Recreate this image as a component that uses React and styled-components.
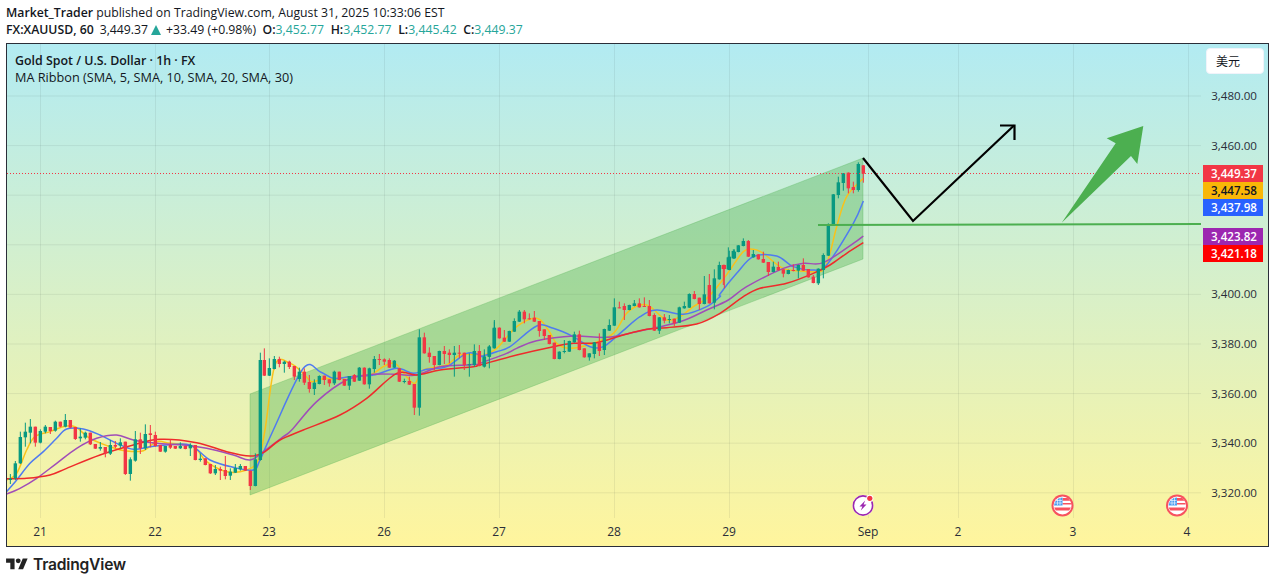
import React from 'react'
import styled, { createGlobalStyle } from 'styled-components'

const UI_FONT = '"Open Sans", "Noto Sans", sans-serif'

const GlobalStyle = createGlobalStyle`
  html, body {
    margin: 0;
    padding: 0;
    background: #fff;
    font-family: ${UI_FONT};
    color: #131722;
  }
`

// candles are read off the picture in groups: [x, bodyTop, bodyBottom, wickTop, wickBottom, colour]
const toCandles = (ox, oy, rows) =>
  rows.map(([x, t, b, wt, wb, c]) => ({
    x: ox + x / 3,
    top: oy + t / 3,
    bottom: oy + b / 3,
    high: oy + (wt ?? t) / 3,
    low: oy + (wb ?? b) / 3,
    up: c === 'g',
  }))

const CANDLES = [
  ...toCandles(0, 380, [
    [31, 296, 300, 282, 312, 'g'], [46, 250, 295, 243, 300, 'g'], [61, 171, 250, 155, 252, 'g'],
    [76, 155, 172, 128, 200, 'g'], [91, 140, 158, 117, 190, 'g'], [106, 140, 188, 140, 200, 'r'],
    [121, 153, 188, 148, 190, 'g'], [136, 140, 155, 135, 160, 'g'], [151, 141, 153, 141, 162, 'r'],
    [166, 125, 152, 122, 155, 'g'], [181, 125, 140, 125, 142, 'r'], [196, 120, 140, 102, 142, 'g'],
    [211, 120, 143, 120, 145, 'r'], [226, 141, 177, 141, 180, 'r'], [241, 170, 175, 145, 185, 'g'],
    [256, 158, 173, 155, 178, 'g'], [271, 158, 193, 158, 195, 'r'], [286, 192, 206, 192, 207, 'r'],
    [301, 201, 206, 186, 212, 'g'], [316, 201, 220, 201, 232, 'r'], [331, 195, 221, 180, 225, 'g'],
    [346, 195, 200, 183, 205, 'r'], [361, 187, 197, 175, 205, 'g'], [376, 185, 282, 185, 285, 'r'],
    [391, 238, 282, 232, 302, 'g'], [406, 178, 242, 153, 245, 'g'], [421, 178, 205, 158, 222, 'r'],
    [436, 162, 205, 133, 210, 'g'], [451, 160, 165, 135, 202, 'r'], [466, 165, 198, 155, 200, 'r'],
    [481, 195, 215, 195, 216, 'r'], [496, 198, 215, 198, 218, 'g'], [511, 195, 203, 178, 207, 'r'],
    [526, 198, 206, 198, 207, 'r'], [541, 198, 205, 187, 207, 'g'], [556, 198, 207, 198, 208, 'r'],
    [571, 195, 205, 190, 228, 'g'], [586, 195, 240, 195, 241, 'r'], [601, 236, 240, 220, 245, 'g'],
    [616, 235, 255, 235, 256, 'r'], [631, 252, 280, 252, 282, 'r'], [646, 267, 280, 255, 285, 'g'],
    [661, 267, 272, 260, 300, 'r'], [676, 270, 288, 228, 298, 'r'], [691, 275, 287, 265, 300, 'g'],
    [706, 264, 278, 252, 279, 'g'], [721, 258, 268, 252, 272, 'g'], [736, 258, 272, 258, 273, 'r'],
    [751, 272, 318, 272, 330, 'r'], [766, 238, 318, 220, 319, 'g'],
  ]),
  ...toCandles(240, 320, [
    [61, 120, 420, 98, 422, 'g'], [73, 120, 167, 85, 168, 'r'], [88, 144, 167, 115, 168, 'g'],
    [103, 117, 147, 108, 148, 'g'], [118, 117, 132, 110, 142, 'r'], [133, 125, 132, 122, 158, 'g'],
    [148, 125, 141, 122, 147, 'r'], [163, 138, 170, 138, 180, 'r'], [178, 155, 177, 143, 185, 'g'],
    [193, 155, 188, 145, 195, 'r'], [208, 186, 207, 165, 218, 'r'], [223, 188, 207, 178, 225, 'g'],
    [238, 168, 192, 166, 193, 'g'], [253, 167, 180, 167, 195, 'r'], [268, 178, 190, 178, 200, 'r'],
    [283, 155, 190, 152, 195, 'g'], [298, 155, 180, 155, 181, 'r'], [313, 177, 197, 177, 198, 'r'],
    [328, 168, 197, 168, 210, 'g'], [343, 165, 185, 162, 186, 'r'], [358, 143, 182, 141, 183, 'g'],
    [373, 143, 193, 142, 194, 'r'], [388, 145, 193, 143, 206, 'g'], [403, 117, 147, 108, 158, 'g'],
    [418, 117, 120, 102, 135, 'r'], [433, 118, 125, 115, 135, 'r'], [448, 120, 143, 115, 144, 'r'],
    [463, 122, 143, 120, 144, 'g'], [478, 145, 185, 145, 186, 'r'], [493, 183, 185, 176, 190, 'g'],
    [508, 183, 194, 170, 195, 'r'], [523, 192, 263, 192, 285, 'r'], [538, 52, 263, 28, 287, 'g'],
    [553, 52, 100, 38, 101, 'r'], [568, 98, 111, 82, 128, 'r'], [583, 108, 135, 108, 150, 'r'],
    [598, 93, 135, 92, 136, 'g'], [613, 93, 102, 78, 132, 'r'], [628, 98, 105, 88, 130, 'r'],
    [643, 98, 105, 78, 170, 'g'], [658, 98, 100, 75, 115, 'r'], [673, 98, 135, 98, 150, 'r'],
    [688, 133, 136, 100, 170, 'g'], [703, 93, 135, 73, 140, 'g'], [718, 93, 138, 75, 139, 'r'],
    [733, 110, 138, 100, 142, 'g'], [748, 80, 110, 75, 111, 'g'], [763, 25, 82, 0, 83, 'g'],
  ]),
  ...toCandles(480, 220, [
    [13, 410, 440, 388, 442, 'g'], [28, 380, 410, 378, 445, 'g'], [43, 323, 385, 305, 386, 'g'],
    [58, 323, 355, 322, 356, 'r'], [73, 353, 365, 330, 366, 'r'], [88, 333, 365, 332, 366, 'g'],
    [103, 303, 335, 295, 336, 'g'], [118, 275, 305, 270, 306, 'g'], [133, 275, 298, 270, 310, 'r'],
    [148, 295, 298, 280, 299, 'r'], [163, 293, 305, 273, 306, 'r'], [178, 303, 333, 303, 350, 'r'],
    [193, 328, 348, 328, 360, 'r'], [208, 345, 372, 345, 373, 'r'], [223, 368, 417, 368, 418, 'r'],
    [238, 395, 417, 394, 418, 'g'], [253, 393, 396, 360, 400, 'g'], [268, 363, 395, 362, 396, 'g'],
    [283, 343, 367, 335, 368, 'g'], [298, 343, 390, 332, 391, 'r'], [313, 385, 412, 385, 413, 'r'],
    [328, 400, 412, 400, 422, 'g'], [343, 367, 402, 366, 415, 'g'], [358, 367, 393, 340, 408, 'r'],
    [373, 327, 390, 326, 405, 'g'], [388, 315, 332, 298, 333, 'g'], [403, 262, 317, 235, 318, 'g'],
    [418, 262, 264, 245, 265, 'r'], [433, 258, 270, 250, 300, 'r'], [448, 255, 270, 254, 271, 'g'],
    [463, 250, 258, 240, 259, 'g'], [478, 250, 262, 235, 263, 'r'], [493, 258, 260, 232, 261, 'r'],
    [508, 258, 288, 240, 289, 'r'], [523, 285, 332, 280, 333, 'r'], [538, 292, 332, 291, 342, 'g'],
    [553, 292, 302, 282, 310, 'r'], [568, 297, 300, 285, 310, 'g'], [583, 296, 310, 296, 318, 'r'],
    [598, 262, 308, 260, 309, 'g'], [613, 258, 265, 245, 266, 'g'], [628, 222, 263, 220, 264, 'g'],
    [643, 222, 237, 213, 238, 'r'], [658, 233, 252, 233, 270, 'r'], [673, 223, 252, 168, 253, 'g'],
    [688, 195, 250, 162, 251, 'r'], [703, 175, 248, 148, 268, 'g'], [718, 135, 178, 125, 179, 'g'],
    [733, 135, 147, 134, 205, 'r'], [748, 110, 150, 92, 151, 'g'], [763, 95, 115, 88, 116, 'g'],
  ]),
  ...toCandles(720, 140, [
    [10, 375, 387, 374, 435, 'r'], [25, 352, 388, 322, 389, 'g'], [40, 333, 355, 328, 356, 'g'],
    [55, 316, 336, 315, 337, 'g'], [70, 303, 318, 295, 319, 'g'], [85, 303, 350, 300, 351, 'r'],
    [100, 342, 352, 330, 353, 'g'], [115, 343, 358, 343, 359, 'r'], [130, 357, 368, 335, 369, 'r'],
    [145, 366, 396, 366, 408, 'r'], [160, 380, 396, 365, 397, 'g'], [175, 381, 391, 365, 392, 'r'],
    [190, 388, 401, 388, 412, 'r'], [205, 390, 402, 389, 403, 'g'], [220, 390, 393, 373, 394, 'r'],
    [235, 375, 392, 374, 415, 'g'], [250, 375, 392, 355, 393, 'r'], [265, 387, 412, 387, 413, 'r'],
    [280, 410, 429, 405, 430, 'r'], [295, 386, 430, 385, 435, 'g'], [310, 345, 390, 340, 415, 'g'],
    [325, 255, 347, 250, 348, 'g'], [340, 163, 257, 162, 258, 'g'], [355, 127, 165, 110, 175, 'g'],
    [370, 100, 129, 99, 152, 'g'], [385, 98, 145, 97, 160, 'r'], [400, 141, 150, 125, 160, 'r'],
    [415, 72, 150, 67, 155, 'g'], [430, 76, 101, 75, 128, 'r'],
  ]),
]

const toLine = (ox, oy, pts) => pts.map(([x, y]) => [ox + x / 3, oy + y / 3])

// catmull-rom through the read-off points, the ribbon lines are smooth in the chart
const smoothPath = pts => {
  let d = `M${pts[0][0]} ${pts[0][1]}`
  for (let i = 0; i < pts.length - 1; i++) {
    const p0 = pts[i - 1] || pts[i]
    const p1 = pts[i]
    const p2 = pts[i + 1]
    const p3 = pts[i + 2] || p2
    const c1x = p1[0] + (p2[0] - p0[0]) / 6
    const c1y = p1[1] + (p2[1] - p0[1]) / 6
    const c2x = p2[0] - (p3[0] - p1[0]) / 6
    const c2y = p2[1] - (p3[1] - p1[1]) / 6
    d += ` C${c1x} ${c1y} ${c2x} ${c2y} ${p2[0]} ${p2[1]}`
  }
  return d
}

const RIBBON = [
  {
    color: '#f9c21a',
    points: [
      ...toLine(0, 380, [[20, 300], [50, 280], [80, 210], [105, 170], [150, 155], [190, 140], [225, 140], [270, 175], [330, 200], [380, 213], [430, 212], [470, 185], [510, 190], [580, 200], [620, 245], [680, 275], [740, 270], [775, 240]]),
      ...toLine(240, 320, [[75, 330], [105, 135], [150, 130], [190, 160], [215, 185], [255, 175], [290, 178], [330, 170], [390, 165], [430, 140], [465, 130], [500, 170], [525, 190], [550, 150], [620, 135], [660, 105], [720, 105]]),
      ...toLine(480, 220, [[0, 410], [50, 385], [110, 320], [170, 295], [205, 330], [230, 370], [270, 385], [340, 370], [400, 340], [440, 280], [480, 255], [510, 260], [560, 300], [600, 290], [640, 260], [680, 235]]),
      ...toLine(720, 140, [[0, 430], [30, 390], [70, 335], [100, 328], [130, 340], [190, 385], [270, 395], [310, 390], [330, 340], [350, 260], [380, 170], [430, 115]]),
    ],
  },
  {
    color: '#4f7bf0',
    points: [
      ...toLine(0, 380, [[20, 335], [50, 300], [90, 250], [130, 215], [170, 175], [200, 147], [250, 147], [300, 165], [350, 190], [400, 208], [450, 200], [500, 195], [570, 195], [630, 240], [700, 262], [760, 270], [780, 240]]),
      ...toLine(240, 320, [[100, 330], [190, 145], [240, 155], [280, 175], [330, 170], [400, 165], [470, 145], [520, 160], [560, 148], [620, 140], [680, 100], [720, 105]]),
      ...toLine(480, 220, [[0, 410], [50, 395], [90, 380], [170, 318], [220, 325], [280, 350], [330, 380], [370, 380], [420, 340], [480, 290], [530, 270], [610, 283], [680, 260], [720, 230]]),
      ...toLine(720, 140, [[0, 462], [50, 400], [100, 350], [170, 348], [220, 380], [280, 390], [320, 375], [400, 250], [430, 183]]),
    ],
  },
  {
    color: '#a04db8',
    points: [
      ...toLine(0, 380, [[20, 342], [60, 325], [110, 295], [170, 250], [230, 205], [290, 175], [350, 165], [400, 180], [470, 190], [550, 195], [620, 205], [700, 225], [750, 240], [790, 215], [850, 170]]),
      ...toLine(240, 320, [[155, 330], [230, 245], [320, 180], [400, 163], [470, 163], [530, 165], [600, 140], [680, 135], [720, 132]]),
      ...toLine(480, 220, [[0, 430], [80, 400], [110, 385], [170, 362], [280, 348], [380, 352], [470, 335], [600, 305], [680, 270]]),
      ...toLine(720, 140, [[25, 480], [80, 440], [190, 385], [250, 370], [310, 368], [400, 310], [430, 288]]),
    ],
  },
  {
    color: '#ee2b2b',
    points: [
      ...toLine(0, 380, [[20, 296], [80, 295], [150, 285], [200, 265], [300, 225], [400, 195], [480, 178], [590, 188], [680, 215], [750, 228], [790, 218], [840, 180]]),
      ...toLine(240, 320, [[190, 330], [300, 285], [380, 235], [470, 160], [530, 165], [600, 150], [700, 140]]),
      ...toLine(480, 220, [[0, 435], [110, 405], [220, 380], [280, 370], [350, 368], [430, 345], [500, 328], [560, 323], [650, 312], [720, 280]]),
      ...toLine(720, 140, [[70, 470], [120, 445], [200, 430], [280, 400], [330, 375], [380, 340], [430, 308]]),
    ],
  },
]

const GRID_X = [40, 155, 269, 384, 499, 614, 729, 868, 958, 1073, 1188]
const GRID_Y = [96, 145.6, 195.2, 244.8, 294.4, 344, 393.6, 443.2, 492.8]

const PRICES = ['3,480.00', '3,460.00', '3,440.00', '3,420.00', '3,400.00', '3,380.00', '3,360.00', '3,340.00', '3,320.00']
const HIDDEN_PRICES = ['3,440.00', '3,420.00'] // covered by the price tags

const DAYS = [
  ['21', 40], ['22', 155], ['23', 269], ['26', 384], ['27', 499], ['28', 614], ['29', 729],
  ['Sep', 868], ['2', 958], ['3', 1073], ['4', 1187],
]

const TAGS = [
  { value: '3,449.37', bg: '#f23645', fg: '#fff', y: 165 },
  { value: '3,447.58', bg: '#f9b707', fg: '#131722', y: 182 },
  { value: '3,437.98', bg: '#2962ff', fg: '#fff', y: 199 },
  { value: '3,423.82', bg: '#9c27b0', fg: '#fff', y: 228 },
  { value: '3,421.18', bg: '#ff0000', fg: '#fff', y: 245 },
]

const Page = styled.div`
  width: 1275px;
  height: 583px;
  overflow: hidden;
  display: flex;
  flex-direction: column;
`

const Header = styled.header`
  height: 43px;
  padding: 4px 6px 0;
  box-sizing: border-box;
  font-size: 12.25px;
  line-height: 17px;
`

const Line = styled.div`
  white-space: nowrap;
`

const Strong = styled.b`
  font-weight: 600;
`

const Symbol = styled(Strong)`
  margin-right: 6px;
`

const Change = styled.span`
  margin-right: 6.5px;
`

const Val = styled.span`
  color: #26a69a;
  margin-right: 6.6px;
`

const UpTriangle = styled.span`
  display: inline-block;
  width: 0;
  height: 0;
  margin: 0 5px 0 3px;
  border-left: 5px solid transparent;
  border-right: 5px solid transparent;
  border-bottom: 10px solid #26a69a;
  vertical-align: -1px;
`

const Panel = styled.section`
  position: relative;
  width: 1263px;
  height: 504px;
  margin-left: 6px;
  box-sizing: border-box;
  border: 1px solid #2a2e39;
  background: linear-gradient(180deg, #b2ebf2 0%, #fff59d 100%);
  overflow: hidden;
`

const ChartSvg = styled.svg`
  position: absolute;
  left: -7px;
  top: -44px;
  width: 1275px;
  height: 583px;
`

const Legend = styled.div`
  position: absolute;
  left: 8px;
  top: 8px;
  font-size: 12.7px;
  line-height: 17px;
`

const LegendTitle = styled(Line)`
  font-size: 12.4px;
  font-weight: 600;
`

const CurrencyButton = styled.div`
  position: absolute;
  left: 1199px;
  top: 4px;
  width: 58px;
  height: 26px;
  box-sizing: border-box;
  padding-left: 9px;
  background: #fff;
  border: 1px solid #f0f3fa;
  border-radius: 4px;
  font: 12px/24px "Noto Sans CJK SC", sans-serif;
`

const PriceAxis = styled.div`
  position: absolute;
  left: 1204px;
  top: 0;
  width: 46px;
  height: 100%;
  font-size: 11.6px;
  text-align: right;
`

const PriceLabel = styled.span`
  position: absolute;
  right: 0;
  top: ${p => p.$y - 44 - 8}px;
  line-height: 16px;
  color: #2a2e39;
`

const PriceTag = styled.div`
  position: absolute;
  left: 1196px;
  top: ${p => p.$y - 44}px;
  width: 60px;
  height: 17px;
  padding-right: 6px;
  box-sizing: border-box;
  background: ${p => p.$bg};
  color: ${p => p.$fg};
  font-size: 11.6px;
  font-weight: 600;
  line-height: 17px;
  text-align: right;
`

const DayLabel = styled.span`
  position: absolute;
  top: 480px;
  left: ${p => p.$x - 7}px;
  transform: translateX(-50%);
  font-size: 12px;
  line-height: 16px;
  font-weight: ${p => (p.$month ? 500 : 400)};
  color: #2a2e39;
`

const Footer = styled.footer`
  display: flex;
  align-items: center;
  gap: 5px;
  height: 34px;
  padding-left: 6px;
`

const Wordmark = styled.span`
  font-family: Inter, sans-serif;
  font-size: 15.6px;
  font-weight: 600;
  letter-spacing: -0.2px;
  color: #222;
`

function Candle({ x, top, bottom, high, low, up }) {
  const color = up ? '#089981' : '#f23645'
  return (
    <g fill={color}>
      <rect x={x - 0.5} y={high} width={1} height={low - high} />
      <rect x={x - 1.7} y={top} width={3.4} height={Math.max(bottom - top, 1)} />
    </g>
  )
}

function LightningEvent({ x, y }) {
  return (
    <g transform={`translate(${x} ${y})`}>
      <circle r={10.5} fill="#fff" />
      <circle r={9.6} fill="none" stroke="#9c27b0" strokeWidth={1.6} />
      <path d="M2.2 -5 L-3.5 1 H-0.6 L-2.2 5 L3.5 -1 H0.6 Z" fill="#9c27b0" />
      <circle cx={6.8} cy={-7.2} r={3.6} fill="#fff" />
      <circle cx={6.8} cy={-7.2} r={2.6} fill="#f23645" />
    </g>
  )
}

function FlagEvent({ x, y }) {
  return (
    <g transform={`translate(${x} ${y})`}>
      <circle r={11} fill="#f7525f" />
      <circle r={9} fill="#fff" />
      <path d="M0 -7.5 H5 A8 8 0 0 1 7.6 -4.8 H0 Z M0 -2.6 H8.4 V-1 H0 Z" fill="#f7525f" />
      <path d="M-8.3 2 H8.3 A8.6 8.6 0 0 1 6.6 5 H-6.6 A8.6 8.6 0 0 1 -8.3 2 Z" fill="#f7525f" />
      <path d="M-8.5 0 A8.5 8.5 0 0 1 0 -8 V0 Z" fill="#4a9df0" />
      <path d="M-6.5 -5 H-0.5 M-7.5 -2.5 H-0.5 M-5 -7 V-0.5 M-2.5 -7.5 V-0.5" stroke="#fff" strokeWidth={0.6} fill="none" />
    </g>
  )
}

function Chart() {
  return (
    <ChartSvg viewBox="0 0 1275 583">
      <g stroke="#2a2e39" strokeOpacity={0.08} strokeWidth={1}>
        {GRID_X.map(x => <line key={x} x1={x + 0.5} x2={x + 0.5} y1={44} y2={518} />)}
        {GRID_Y.map(y => <line key={y} x1={7} x2={1201} y1={y} y2={y} />)}
      </g>

      <polygon points="250,394 863,158 863,259 250,495" fill="#4caf50" fillOpacity={0.38} stroke="#4caf50" strokeOpacity={0.3} />

      {RIBBON.map(r => (
        <path
          key={r.color}
          d={smoothPath(r.points)}
          fill="none"
          stroke={r.color}
          strokeWidth={1.5}
          strokeLinejoin="round"
        />
      ))}

      {CANDLES.map(c => <Candle key={`${c.x}-${c.top}`} {...c} />)}

      <line x1={7} x2={1201} y1={173.5} y2={173.5} stroke="#f23645" strokeWidth={1} strokeDasharray="1 2" />

      <line x1={818} x2={1201} y1={225} y2={224} stroke="#4caf50" strokeWidth={2.2} />
      <polygon points="1061.7,222.7 1115.7,143.3 1106.7,138.3 1143.3,126 1137.3,164 1131,156" fill="#4caf50" />

      <polyline points="863,158 913,221 1014,125.5" fill="none" stroke="#000" strokeWidth={2.2} />
      <polyline points="1000,125.5 1014.5,125.5 1014.5,140" fill="none" stroke="#000" strokeWidth={2.2} />

      <LightningEvent x={863} y={505.5} />
      <FlagEvent x={1062.5} y={505.5} />
      <FlagEvent x={1177} y={505.5} />
    </ChartSvg>
  )
}

export default function App() {
  return (
    <Page>
      <GlobalStyle />
      <Header>
        <Line><Strong>Market_Trader</Strong> published on TradingView.com, August 31, 2025 10:33:06 EST</Line>
        <Line>
          <Symbol>FX:XAUUSD, 60</Symbol>
          3,449.37<UpTriangle /><Change>+33.49 (+0.98%)</Change>
          <Strong>O:</Strong><Val>3,452.77</Val>
          <Strong>H:</Strong><Val>3,452.77</Val>
          <Strong>L:</Strong><Val>3,445.42</Val>
          <Strong>C:</Strong><Val>3,449.37</Val>
        </Line>
      </Header>
      <Panel>
        <Chart />
        <Legend>
          <LegendTitle>Gold Spot / U.S. Dollar · 1h · FX</LegendTitle>
          <Line>MA Ribbon (SMA, 5, SMA, 10, SMA, 20, SMA, 30)</Line>
        </Legend>
        <CurrencyButton>美元</CurrencyButton>
        <PriceAxis>
          {PRICES.map((p, i) =>
            HIDDEN_PRICES.includes(p) ? null : <PriceLabel key={p} $y={GRID_Y[i]}>{p}</PriceLabel>
          )}
        </PriceAxis>
        {TAGS.map(t => (
          <PriceTag key={t.value} $y={t.y} $bg={t.bg} $fg={t.fg}>{t.value}</PriceTag>
        ))}
        {DAYS.map(([label, x]) => (
          <DayLabel key={label} $x={x} $month={label === 'Sep'}>{label}</DayLabel>
        ))}
      </Panel>
      <Footer>
        <svg width="22" height="17" viewBox="0 0 36 28" fill="#222">
          <path d="M14 22H7V11H0V4h14v18zM28 22h-8l7.5-18h8L28 22z" />
          <circle cx="20" cy="8" r="4" />
        </svg>
        <Wordmark>TradingView</Wordmark>
      </Footer>
    </Page>
  )
}
